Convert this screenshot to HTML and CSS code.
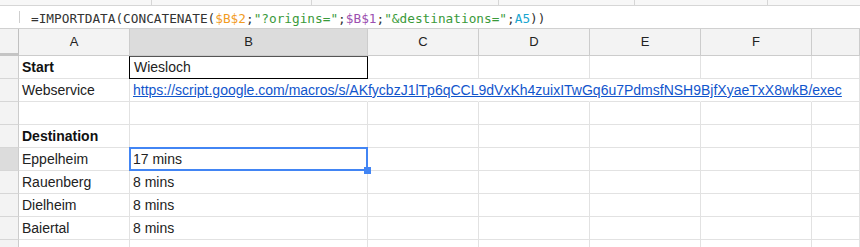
FILE: index.html
```html
<!DOCTYPE html>
<html lang="en">
<head>
  <meta charset="UTF-8">
  <title>Distance sheet</title>
  <link rel="stylesheet" href="styles.css">
</head>
<body>

  <!-- toolbar bottom edge -->
  <div class="toolbar">
    <span class="tb-seg" style="width:152px"></span>
    <span class="tb-seg" style="width:160px"></span>
    <span class="tb-seg" style="width:187px"></span>
    <span class="tb-seg" style="width:136px"></span>
    <span class="tb-seg" style="width:133px"></span>
    <span class="tb-rest"></span>
  </div>

  <!-- formula bar -->
  <div class="formula-bar">
    <span class="fx-mark"></span>
    <span class="formula">=IMPORTDATA(CONCATENATE(<span class="ref-orange">$B$2</span>;<span class="str">"?origins="</span>;<span class="ref-purple">$B$1</span>;<span class="str">"&amp;destinations="</span>;<span class="ref-cyan">A5</span>))</span>
  </div>

  <!-- grid -->
  <div class="sheet">
    <div class="corner"></div>
    <div class="col-head">A</div>
    <div class="col-head active">B</div>
    <div class="col-head">C</div>
    <div class="col-head">D</div>
    <div class="col-head">E</div>
    <div class="col-head">F</div>
    <div class="col-head"></div>

    <div class="row-head"></div>
    <div class="cell bold">Start</div>
    <div class="cell boxed">Wiesloch</div>
    <div class="cell"></div><div class="cell"></div><div class="cell"></div><div class="cell"></div><div class="cell"></div>

    <div class="row-head"></div>
    <div class="cell">Webservice</div>
    <div class="cell open"><a class="link" href="#">https://script.google.com/macros/s/AKfycbzJ1lTp6qCCL9dVxKh4zuixITwGq6u7PdmsfNSH9BjfXyaeTxX8wkB/exec</a></div>
    <div class="cell open"></div><div class="cell open"></div><div class="cell open"></div><div class="cell open"></div><div class="cell"></div>

    <div class="row-head"></div>
    <div class="cell"></div><div class="cell"></div><div class="cell"></div><div class="cell"></div><div class="cell"></div><div class="cell"></div><div class="cell"></div>

    <div class="row-head"></div>
    <div class="cell bold">Destination</div>
    <div class="cell"></div><div class="cell"></div><div class="cell"></div><div class="cell"></div><div class="cell"></div><div class="cell"></div>

    <div class="row-head active"></div>
    <div class="cell">Eppelheim</div>
    <div class="cell selected">17 mins<span class="sel-box"></span><span class="sel-handle"></span></div>
    <div class="cell"></div><div class="cell"></div><div class="cell"></div><div class="cell"></div><div class="cell"></div>

    <div class="row-head"></div>
    <div class="cell">Rauenberg</div>
    <div class="cell">8 mins</div>
    <div class="cell"></div><div class="cell"></div><div class="cell"></div><div class="cell"></div><div class="cell"></div>

    <div class="row-head"></div>
    <div class="cell">Dielheim</div>
    <div class="cell">8 mins</div>
    <div class="cell"></div><div class="cell"></div><div class="cell"></div><div class="cell"></div><div class="cell"></div>

    <div class="row-head"></div>
    <div class="cell">Baiertal</div>
    <div class="cell">8 mins</div>
    <div class="cell"></div><div class="cell"></div><div class="cell"></div><div class="cell"></div><div class="cell"></div>

    <div class="row-head"></div>
    <div class="cell"></div><div class="cell"></div><div class="cell"></div><div class="cell"></div><div class="cell"></div><div class="cell"></div><div class="cell"></div>
  </div>

</body>
</html>
```

FILE: styles.css
```css
body {
  margin: 0;
  padding: 0;
  height: 247px;
  background: #fff;
  color: #222;
  font-family: "Liberation Sans", Arial, sans-serif;
  overflow: hidden;
}

/* toolbar strip */
.toolbar {
  display: flex;
  height: 5px;
  border-bottom: 1px solid #d6d6d6;
  background: #f7f7f7;
}

.tb-seg {
  box-sizing: border-box;
  height: 5px;
  border-right: 1px solid #d6d6d6;
}

.tb-rest {
  flex: 1;
}

/* formula bar */
.formula-bar {
  display: flex;
  align-items: center;
  height: 22px;
  border-bottom: 1px solid #d0d0d0;
  background: #fff;
}

.fx-mark {
  width: 1px;
  height: 12px;
  margin-left: 19px;
  margin-right: 11px;
  background: #cfcfcf;
}

.formula {
  font-family: "DejaVu Sans Mono", "Liberation Mono", monospace;
  font-size: 12.75px;
  color: #333;
  white-space: nowrap;
  padding-top: 2px;
}

.ref-orange { color: #f29c1f; }
.ref-purple { color: #9c4fb0; }
.ref-cyan { color: #1aa6d0; }
.str { color: #3a9a3a; }

/* grid */
.sheet {
  display: grid;
  grid-template-columns: 19px 111px 238px 111px 111px 111px 111px 1fr;
  grid-template-rows: 27px;
  grid-auto-rows: 23px;
}

.corner,
.col-head,
.row-head {
  box-sizing: border-box;
  background: #f3f3f3;
  border-right: 1px solid #cccccc;
  border-bottom: 1px solid #cccccc;
}

.corner {
  border-right: 1px solid #c0c0c0;
  border-bottom: 3px solid #c4c4c4;
}

.col-head {
  text-align: center;
  font-size: 13px;
  line-height: 26px;
  color: #222;
}

.col-head.active,
.row-head.active {
  background: #dcdcdc;
}

.row-head {
  border-bottom-color: #d6d6d6;
}

.cell {
  box-sizing: border-box;
  padding: 0 3px;
  font-size: 14px;
  line-height: 23px;
  white-space: nowrap;
  border-right: 1px solid #e2e2e2;
  border-bottom: 1px solid #e2e2e2;
  color: #222;
}

.cell.bold {
  font-weight: bold;
  color: #111;
}

.cell.open {
  border-right-color: transparent;
}

.cell.boxed {
  border: 1px solid #000;
  border-top-color: #555;
  margin-left: -1px;
  padding-left: 4px;
  line-height: 21px;
}

.cell.selected {
  position: relative;
  z-index: 1;
}

.link {
  color: #1155cc;
  text-decoration: underline;
}

.sel-box {
  position: absolute;
  top: -1px;
  left: -1px;
  right: -1px;
  bottom: -1px;
  border: 2px solid #4285f4;
  box-sizing: border-box;
}

.sel-handle {
  position: absolute;
  right: -4px;
  bottom: -4px;
  width: 7px;
  height: 7px;
  background: #4285f4;
}
```
